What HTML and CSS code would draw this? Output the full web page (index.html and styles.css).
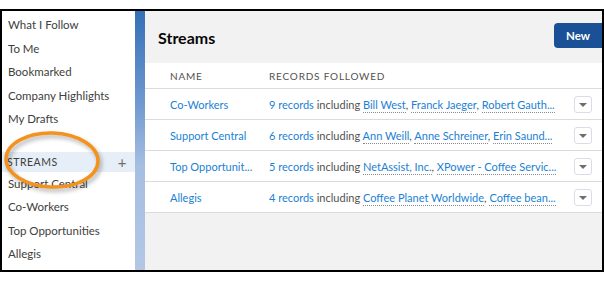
FILE: index.html
```html
<!DOCTYPE html>
<html lang="en">
<head>
  <meta charset="UTF-8">
  <meta name="viewport" content="width=device-width, initial-scale=1.0">
  <title>Streams</title>
  <link rel="stylesheet" href="styles.css">
</head>
<body>
  <div class="frame">
    <aside class="sidebar">
      <ul class="nav">
        <li>What I Follow</li>
        <li>To Me</li>
        <li>Bookmarked</li>
        <li>Company Highlights</li>
        <li>My Drafts</li>
      </ul>
      <div class="section-head">
        <span>Streams</span>
        <span class="add">+</span>
      </div>
      <ul class="nav">
        <li>Support Central</li>
        <li>Co-Workers</li>
        <li>Top Opportunities</li>
        <li>Allegis</li>
      </ul>
      <svg class="callout" width="110" height="70" viewBox="0 0 110 70">
        <ellipse cx="52" cy="33" rx="46" ry="27" transform="rotate(2 52 33)" />
      </svg>
    </aside>

    <div class="stripe"></div>

    <main class="main">
      <header class="page-head">
        <h1>Streams</h1>
        <button class="btn-new">New</button>
      </header>

      <table class="streams">
        <thead>
          <tr>
            <th class="col-name">Name</th>
            <th>Records Followed</th>
            <th class="col-menu"></th>
          </tr>
        </thead>
        <tbody>
          <tr>
            <td class="col-name"><a>Co-Workers</a></td>
            <td><a>9 records</a> including <a class="rec">Bill West</a>, <a class="rec">Franck Jaeger</a>, <a class="rec">Robert Gauth...</a></td>
            <td class="col-menu"><span class="menu-btn"></span></td>
          </tr>
          <tr>
            <td class="col-name"><a>Support Central</a></td>
            <td><a>6 records</a> including <a class="rec">Ann Weill</a>, <a class="rec">Anne Schreiner</a>, <a class="rec">Erin Saund...</a></td>
            <td class="col-menu"><span class="menu-btn"></span></td>
          </tr>
          <tr>
            <td class="col-name"><a>Top Opportunit...</a></td>
            <td><a>5 records</a> including <a class="rec">NetAssist, Inc.</a>, <a class="rec">XPower - Coffee Servic...</a></td>
            <td class="col-menu"><span class="menu-btn"></span></td>
          </tr>
          <tr>
            <td class="col-name"><a>Allegis</a></td>
            <td><a>4 records</a> including <a class="rec">Coffee Planet Worldwide</a>, <a class="rec">Coffee bean...</a></td>
            <td class="col-menu"><span class="menu-btn"></span></td>
          </tr>
        </tbody>
      </table>
    </main>
  </div>
</body>
</html>
```

FILE: styles.css
```css
body {
  margin: 0;
  background: #fff;
  font-family: Lato, "Open Sans", sans-serif;
  color: #3e3e3c;
}
.frame {
  display: flex;
  width: 604px;
  height: 263px;
  margin-top: 9px;
  border: 2px solid #000;
  box-sizing: border-box;
  overflow: hidden;
}
.sidebar {
  position: relative;
  width: 133px;
  flex-shrink: 0;
  background: #fff;
  padding-top: 2px;
}
.nav {
  list-style: none;
  margin: 0;
  padding: 0;
}
.nav li {
  padding-left: 6px;
  font-size: 11.5px;
  line-height: 23.5px;
  white-space: nowrap;
}
.section-head {
  display: flex;
  justify-content: space-between;
  align-items: center;
  height: 20px;
  margin-top: 21px;
  padding: 0 8px 0 5px;
  background: #e6eef7;
  font-size: 10.5px;
  letter-spacing: 0.5px;
  text-transform: uppercase;
}
.add {
  font-size: 15px;
  color: #706e6b;
}
.callout {
  position: absolute;
  left: -2px;
  top: 116px;
  overflow: visible;
  filter: drop-shadow(2px 3px 2px rgba(0, 0, 0, 0.3));
}
.callout ellipse {
  fill: none;
  stroke: #f5921e;
  stroke-width: 3.5;
}
.stripe {
  width: 10px;
  flex-shrink: 0;
  background: linear-gradient(#3370b7, #6f98d0 35%, #a6bee2 60%, #b3c7e5);
}
.main {
  flex: 1;
  display: flex;
  flex-direction: column;
  background: #f3f2f2;
}
.page-head {
  display: flex;
  align-items: center;
  justify-content: space-between;
  height: 52px;
  padding-left: 13px;
}
.page-head h1 {
  margin: 0;
  font-size: 16px;
  font-weight: 700;
  color: #080707;
}
.btn-new {
  width: 48px;
  height: 25px;
  margin-top: -4px;
  border: none;
  border-radius: 4px 0 0 4px;
  background: #1a5196;
  color: #fff;
  font-family: inherit;
  font-size: 11.5px;
  font-weight: 700;
}
.streams {
  width: 100%;
  border-collapse: collapse;
  background: #fff;
  font-size: 11px;
}
.streams th {
  height: 25px;
  padding: 0;
  text-align: left;
  font-size: 10px;
  font-weight: 400;
  letter-spacing: 0.8px;
  text-transform: uppercase;
  color: #54514f;
  border-bottom: 1px solid #dddbda;
}
.streams td {
  height: 30px;
  padding: 0;
  white-space: nowrap;
  color: #54514f;
  border-bottom: 1px solid #dddbda;
}
.streams .col-name {
  width: 99px;
  padding-left: 25px;
}
.streams .col-menu {
  width: 28px;
}
.streams a {
  color: #1b7fd4;
}
.streams a.rec {
  border-bottom: 1px dotted #8a8a8a;
  padding-bottom: 1px;
}
.menu-btn {
  display: block;
  position: relative;
  width: 16px;
  height: 15px;
  border: 1px solid #d8dde6;
  border-radius: 3px;
}
.menu-btn::after {
  content: "";
  position: absolute;
  left: 4px;
  top: 6px;
  border-left: 4px solid transparent;
  border-right: 4px solid transparent;
  border-top: 4px solid #706e6b;
}
```
